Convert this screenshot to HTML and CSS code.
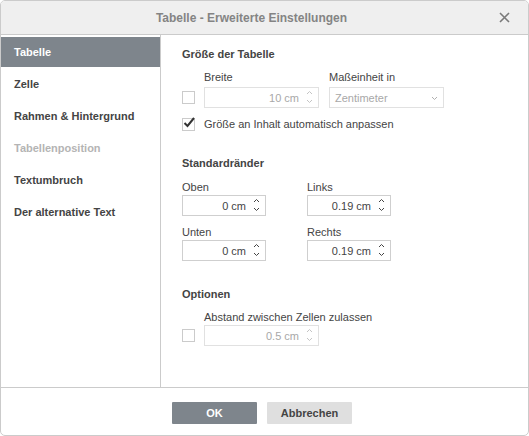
FILE: index.html
```html
<!DOCTYPE html>
<html lang="de">
<head>
  <meta charset="UTF-8">
  <title>Tabelle - Erweiterte Einstellungen</title>
  <link rel="stylesheet" href="styles.css">
</head>
<body>

<div class="dialog">
  <div class="title-bar">
    <span class="title">Tabelle - Erweiterte Einstellungen</span>
    <svg class="close" width="11" height="11" viewBox="0 0 11 11">
      <path d="M1 1 L10 10 M10 1 L1 10" stroke="#7a7a7a" stroke-width="1.6" fill="none"/>
    </svg>
  </div>

  <div class="main">
    <!-- Seitenleiste -->
    <div class="sidebar">
      <div class="tab active">Tabelle</div>
      <div class="tab">Zelle</div>
      <div class="tab">Rahmen &amp; Hintergrund</div>
      <div class="tab disabled">Tabellenposition</div>
      <div class="tab">Textumbruch</div>
      <div class="tab">Der alternative Text</div>
    </div>

    <div class="panel">
      <div class="header">Größe der Tabelle</div>

      <div class="size-row">
        <span class="checkbox"></span>
        <div class="group">
          <div class="label">Breite</div>
          <div class="field spin off">
            <span class="value">10 cm</span>
            <svg class="arrows" width="7" height="14" viewBox="0 0 7 14">
              <path d="M1 4 L3.5 1.5 L6 4 M1 10 L3.5 12.5 L6 10" stroke="#c4c4c4" fill="none"/>
            </svg>
          </div>
        </div>
        <div class="group unit">
          <div class="label">Maßeinheit in</div>
          <div class="field select off">
            <span class="value">Zentimeter</span>
            <svg class="chevron" width="7" height="5" viewBox="0 0 7 5">
              <path d="M1 1 L3.5 3.5 L6 1" stroke="#b0b0b0" fill="none"/>
            </svg>
          </div>
        </div>
      </div>

      <div class="check-row">
        <span class="checkbox checked">
          <svg width="14" height="14" viewBox="0 0 14 14">
            <path d="M2.5 7 L5.5 10 L12 2" stroke="#333" stroke-width="2" fill="none"/>
          </svg>
        </span>
        <span class="label">Größe an Inhalt automatisch anpassen</span>
      </div>

      <div class="header margins-head">Standardränder</div>

      <div class="margins">
        <div class="group">
          <div class="label">Oben</div>
          <div class="field spin small">
            <span class="value">0 cm</span>
            <svg class="arrows" width="7" height="14" viewBox="0 0 7 14">
              <path d="M1 4 L3.5 1.5 L6 4 M1 10 L3.5 12.5 L6 10" stroke="#444" fill="none"/>
            </svg>
          </div>
        </div>
        <div class="group">
          <div class="label">Links</div>
          <div class="field spin small">
            <span class="value">0.19 cm</span>
            <svg class="arrows" width="7" height="14" viewBox="0 0 7 14">
              <path d="M1 4 L3.5 1.5 L6 4 M1 10 L3.5 12.5 L6 10" stroke="#444" fill="none"/>
            </svg>
          </div>
        </div>
        <div class="group">
          <div class="label">Unten</div>
          <div class="field spin small">
            <span class="value">0 cm</span>
            <svg class="arrows" width="7" height="14" viewBox="0 0 7 14">
              <path d="M1 4 L3.5 1.5 L6 4 M1 10 L3.5 12.5 L6 10" stroke="#444" fill="none"/>
            </svg>
          </div>
        </div>
        <div class="group">
          <div class="label">Rechts</div>
          <div class="field spin small">
            <span class="value">0.19 cm</span>
            <svg class="arrows" width="7" height="14" viewBox="0 0 7 14">
              <path d="M1 4 L3.5 1.5 L6 4 M1 10 L3.5 12.5 L6 10" stroke="#444" fill="none"/>
            </svg>
          </div>
        </div>
      </div>

      <div class="header options-head">Optionen</div>

      <div class="size-row options-row">
        <span class="checkbox"></span>
        <div class="group">
          <div class="label">Abstand zwischen Zellen zulassen</div>
          <div class="field spin off">
            <span class="value">0.5 cm</span>
            <svg class="arrows" width="7" height="14" viewBox="0 0 7 14">
              <path d="M1 4 L3.5 1.5 L6 4 M1 10 L3.5 12.5 L6 10" stroke="#c4c4c4" fill="none"/>
            </svg>
          </div>
        </div>
      </div>
    </div>
  </div>

  <div class="footer">
    <button class="btn primary">OK</button>
    <button class="btn">Abbrechen</button>
  </div>
</div>

</body>
</html>
```

FILE: styles.css
```css
body {
  margin: 0;
  padding: 0;
  background-color: #ffffff;
  font-family: 'Liberation Sans', Arial, sans-serif;
  font-size: 11px;
  color: #444444;
}

.dialog {
  width: 529px;
  height: 436px;
  box-sizing: border-box;
  border: 1px solid #cbcbcb;
  border-radius: 5px;
  display: flex;
  flex-direction: column;
  overflow: hidden;
}

.title-bar {
  height: 34px;
  box-sizing: border-box;
  flex: none;
  background-color: #efefef;
  border-bottom: 1px solid #cbcbcb;
  position: relative;
  display: flex;
  align-items: center;
  justify-content: center;
  padding-right: 26px;
  padding-top: 1px;
}

.title {
  font-size: 12px;
  font-weight: bold;
  color: #848484;
}

.close {
  position: absolute;
  right: 18px;
  top: 11px;
}

.main {
  flex: 1;
  display: flex;
}

.sidebar {
  width: 159px;
  border-right: 1px solid #cbcbcb;
  padding-top: 2px;
}

.tab {
  height: 30px;
  line-height: 30px;
  margin-bottom: 2px;
  padding-left: 13px;
  font-weight: bold;
  color: #444444;
}

.tab.active {
  background-color: #7e858c;
  color: #ffffff;
}

.tab.disabled {
  color: #b4b4b4;
}

.panel {
  flex: 1;
  padding: 12px 0 0 21px;
}

.header {
  font-weight: bold;
  line-height: 14px;
}

.label {
  line-height: 14px;
}

.size-row {
  display: flex;
  align-items: flex-end;
  gap: 9px;
  margin-top: 9px;
}

.size-row .label {
  margin-bottom: 3px;
}

.size-row .checkbox {
  margin-bottom: 4px;
}

.group {
  display: flex;
  flex-direction: column;
}

.group.unit {
  margin-left: 1px;
}

.checkbox {
  width: 13px;
  height: 13px;
  box-sizing: border-box;
  border: 1px solid #cbcbcb;
  flex: none;
  position: relative;
}

.checkbox svg {
  position: absolute;
  left: -1px;
  top: -3px;
}

.check-row {
  display: flex;
  align-items: center;
  gap: 9px;
  margin-top: 9px;
}

.field {
  height: 21px;
  box-sizing: border-box;
  border: 1px solid #cfcfcf;
  display: flex;
  align-items: center;
  position: relative;
}

.spin {
  width: 115px;
  justify-content: flex-end;
  padding-right: 19px;
}

.spin.small {
  width: 84px;
}

.arrows {
  position: absolute;
  right: 5px;
  top: 2px;
}

.select {
  width: 115px;
  padding-left: 5px;
}

.chevron {
  position: absolute;
  right: 5px;
  top: 8px;
}

.off {
  border-color: #e1e1e1;
  color: #a8a8a8;
}

.margins-head {
  margin-top: 25px;
}

.margins {
  display: grid;
  grid-template-columns: 125px 84px;
  row-gap: 9px;
  margin-top: 10px;
}

.margins .label {
  margin-bottom: 1px;
}

.options-head {
  margin-top: 26px;
}

.options-row .label {
  margin-bottom: 1px;
}

.footer {
  height: 48px;
  flex: none;
  box-sizing: border-box;
  border-top: 1px solid #cbcbcb;
  display: flex;
  justify-content: center;
  align-items: flex-start;
  gap: 10px;
  padding: 14px 5px 0 0;
}

.btn {
  width: 85px;
  height: 22px;
  border: none;
  border-radius: 1px;
  background-color: #dfdfdf;
  color: #444444;
  font-family: 'Liberation Sans', Arial, sans-serif;
  font-size: 11px;
  font-weight: bold;
  padding: 0;
}

.btn.primary {
  background-color: #7e858c;
  color: #ffffff;
}
```
